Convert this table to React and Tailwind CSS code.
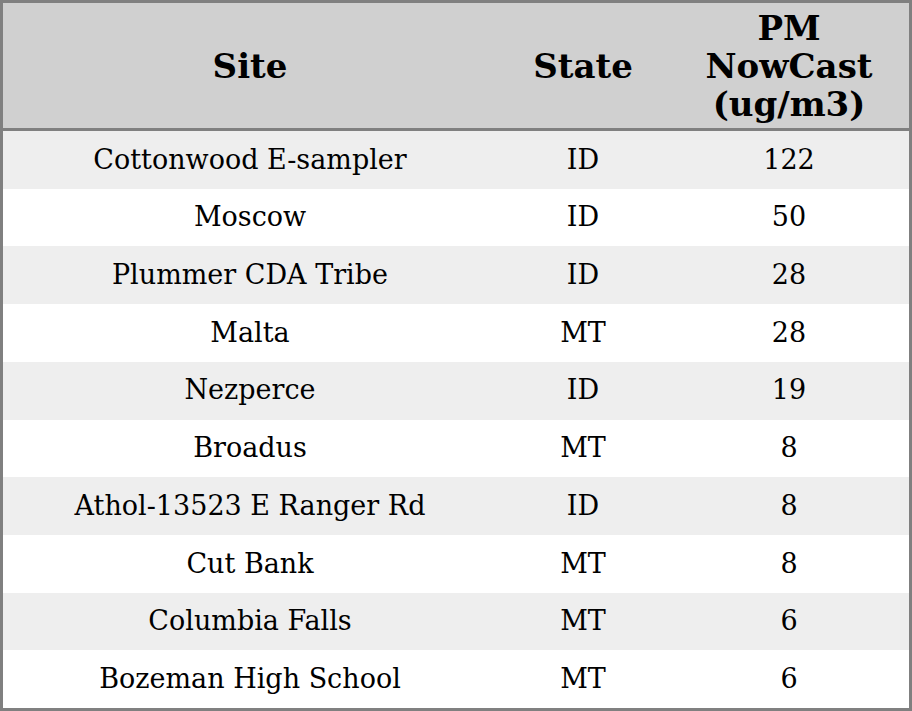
import React from 'react';

const rows = [
  ['Cottonwood E-sampler', 'ID', '122'],
  ['Moscow', 'ID', '50'],
  ['Plummer CDA Tribe', 'ID', '28'],
  ['Malta', 'MT', '28'],
  ['Nezperce', 'ID', '19'],
  ['Broadus', 'MT', '8'],
  ['Athol-13523 E Ranger Rd', 'ID', '8'],
  ['Cut Bank', 'MT', '8'],
  ['Columbia Falls', 'MT', '6'],
  ['Bozeman High School', 'MT', '6'],
];

export default function App() {
  return (
    <div className="w-[912px] h-[711px] bg-white font-['DejaVu_Serif',serif] text-black">
      <div className="h-full border-[3px] border-[#808080] flex flex-col">
        <div className="grid grid-cols-[494px_172px_1fr] h-[128px] bg-[#d0d0d0] border-b-[3px] border-[#808080] font-bold text-[34px] leading-[38px]">
          <div className="flex items-center justify-center">Site</div>
          <div className="flex items-center justify-center">State</div>
          <div className="flex items-center justify-center text-center">PM<br />NowCast<br />(ug/m3)</div>
        </div>
        <div className="flex-1 flex flex-col">
          {rows.map((r, i) => (
            <div
              key={i}
              className={`flex-1 grid grid-cols-[494px_172px_1fr] items-center text-[27px] ${i % 2 === 0 ? 'bg-[#eeeeee]' : 'bg-white'}`}
            >
              <div className="text-center">{r[0]}</div>
              <div className="text-center">{r[1]}</div>
              <div className="text-center">{r[2]}</div>
            </div>
          ))}
        </div>
      </div>
    </div>
  );
}
